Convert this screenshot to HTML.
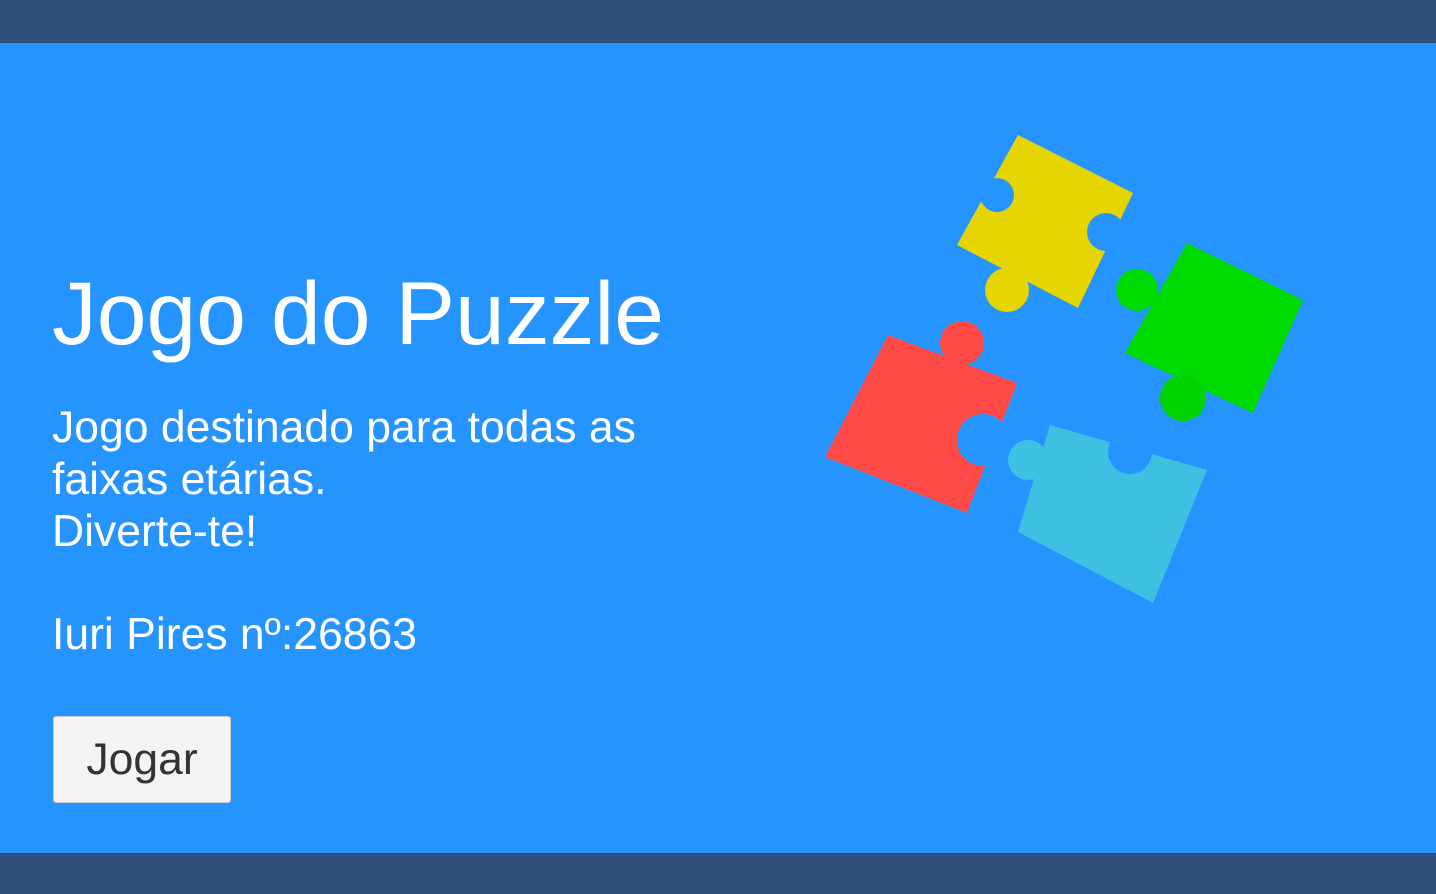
<!DOCTYPE html>
<html><head><meta charset="utf-8"><style>
html,body{margin:0;padding:0}
body{width:1436px;height:894px;background:#2594fe;position:relative;overflow:hidden;font-family:"Liberation Sans",sans-serif;color:#fff}
.bar{position:absolute;left:0;width:1436px;background:#314f7b}
h1{position:absolute;left:52px;top:263px;margin:0;font-weight:normal;font-size:89.5px;line-height:100px;white-space:nowrap}
.p{position:absolute;left:52px;top:402px;font-size:44.5px;line-height:52px;white-space:nowrap}
.n{position:absolute;left:52px;top:609px;font-size:44.5px;line-height:52px;white-space:nowrap}
.btn{position:absolute;left:53px;top:716px;width:178px;height:87px;background:#f4f4f4;border:1px solid #ccc;border-radius:3px;box-sizing:border-box;color:#333;font-size:44.5px;text-align:center;line-height:86px}
svg{position:absolute;left:0;top:0}
</style></head><body>
<div class="bar" style="top:0;height:43px"></div>
<div class="bar" style="top:853px;height:41px"></div>
<h1>Jogo do Puzzle</h1>
<div class="p">Jogo destinado para todas as<br>faixas etárias.<br>Diverte-te!</div>
<div class="n">Iuri Pires nº:26863</div>
<div class="btn">Jogar</div>
<svg width="1436" height="894">
<polygon points="1018,135 1133,193 1078,308 957,245" fill="#e6d600"/>
<circle cx="1007" cy="290" r="22" fill="#e6d600"/>
<circle cx="997" cy="195" r="17" fill="#2594fe"/>
<circle cx="1106" cy="232" r="19" fill="#2594fe"/>
<polygon points="1187,243 1303,300 1253,413 1125,353" fill="#00dc00"/>
<circle cx="1137" cy="290" r="21" fill="#00dc00"/>
<circle cx="1183" cy="398" r="23" fill="#00d400"/>
<polygon points="888,335 1017,383 967,513 825,457" fill="#ff4a48"/>
<circle cx="962" cy="343" r="22" fill="#ff4a48"/>
<circle cx="983" cy="440" r="26" fill="#2594fe"/>
<polygon points="1050,425 1207,470 1153,603 1018,532" fill="#3ec0e2"/>
<circle cx="1028" cy="460" r="20" fill="#3ec0e2"/>
<circle cx="1130" cy="452" r="22" fill="#2594fe"/>
</svg>
</body></html>
